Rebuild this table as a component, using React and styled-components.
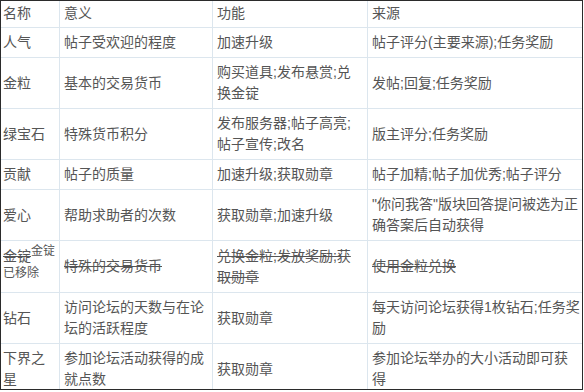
import React from "react";
import styled, { createGlobalStyle } from "styled-components";

const GlobalStyle = createGlobalStyle`
  html, body {
    margin: 0;
    padding: 0;
    background: #fff;
  }
  body {
    font-family: "Liberation Sans", "Noto Sans CJK SC", sans-serif;
  }
`;

const Frame = styled.div`
  width: 583px;
  height: 390px;
  box-sizing: border-box;
  border: 1px solid #2b2b2b;
  overflow: hidden;
  background: #fff;
`;

const Table = styled.table`
  width: 581px;
  table-layout: fixed;
  border-collapse: separate;
  border-spacing: 0;
  color: #555;
  font-size: 14px;
  line-height: 21px;
`;

const Cell = styled.td`
  box-sizing: border-box;
  vertical-align: middle;
  text-align: left;
  font-weight: normal;
  padding: ${(p) => (p.$head ? "2px" : "4px")} ${(p) => p.$pr ?? 6}px
    ${(p) => (p.$head ? "3px" : "4px")} ${(p) => p.$pl ?? 4}px;
  border-bottom: 1px solid #dce6ee;
  border-right: ${(p) => (p.$last ? "none" : "1px solid #dce6ee")};
  text-decoration: ${(p) => (p.$gone ? "line-through" : "none")};
  word-break: break-all;
`;

const Note = styled.sup`
  font-size: 12px;
  line-height: 12px;
  text-decoration: none;
  display: inline;
`;

const Struck = styled.span`
  text-decoration: line-through;
`;

const widths = [59, 153, 155, 214];

const rows = [
  ["人气", "帖子受欢迎的程度", "加速升级", "帖子评分(主要来源);任务奖励"],
  ["金粒", "基本的交易货币", "购买道具;发布悬赏;兑换金锭", "发帖;回复;任务奖励"],
  ["绿宝石", "特殊货币积分", "发布服务器;帖子高亮;帖子宣传;改名", "版主评分;任务奖励"],
  ["贡献", "帖子的质量", "加速升级;获取勋章", "帖子加精;帖子加优秀;帖子评分"],
  ["爱心", "帮助求助者的次数", "获取勋章;加速升级", "\"你问我答\"版块回答提问被选为正确答案后自动获得"],
  ["金锭", "特殊的交易货币", "兑换金粒;发放奖励;获取勋章", "使用金粒兑换", true],
  ["钻石", "访问论坛的天数与在论坛的活跃程度", "获取勋章", "每天访问论坛获得1枚钻石;任务奖励"],
  ["下界之星", "参加论坛活动获得的成就点数", "获取勋章", "参加论坛举办的大小活动即可获得"],
];

const padFor = (i) => ({
  $pl: i === 0 ? 2 : 4,
  $pr: i === 0 ? 2 : i === 3 ? 1 : 6,
  $last: i === 3,
});

export default function App() {
  return (
    <>
      <GlobalStyle />
      <Frame>
        <Table>
          <colgroup>
            {widths.map((w, i) => (
              <col key={i} style={{ width: w }} />
            ))}
          </colgroup>
          <thead>
            <tr>
              {["名称", "意义", "功能", "来源"].map((h, i) => (
                <Cell as="th" key={h} $head {...padFor(i)}>
                  {h}
                </Cell>
              ))}
            </tr>
          </thead>
          <tbody>
            {rows.map((r) => (
              <tr key={r[0]}>
                {r.slice(0, 4).map((c, i) =>
                  i === 0 && r[4] ? (
                    <Cell key={i} {...padFor(i)}>
                      <Struck>{c}</Struck>
                      <Note>金锭已移除</Note>
                    </Cell>
                  ) : (
                    <Cell key={i} $gone={r[4]} {...padFor(i)}>
                      {c}
                    </Cell>
                  )
                )}
              </tr>
            ))}
          </tbody>
        </Table>
      </Frame>
    </>
  );
}
